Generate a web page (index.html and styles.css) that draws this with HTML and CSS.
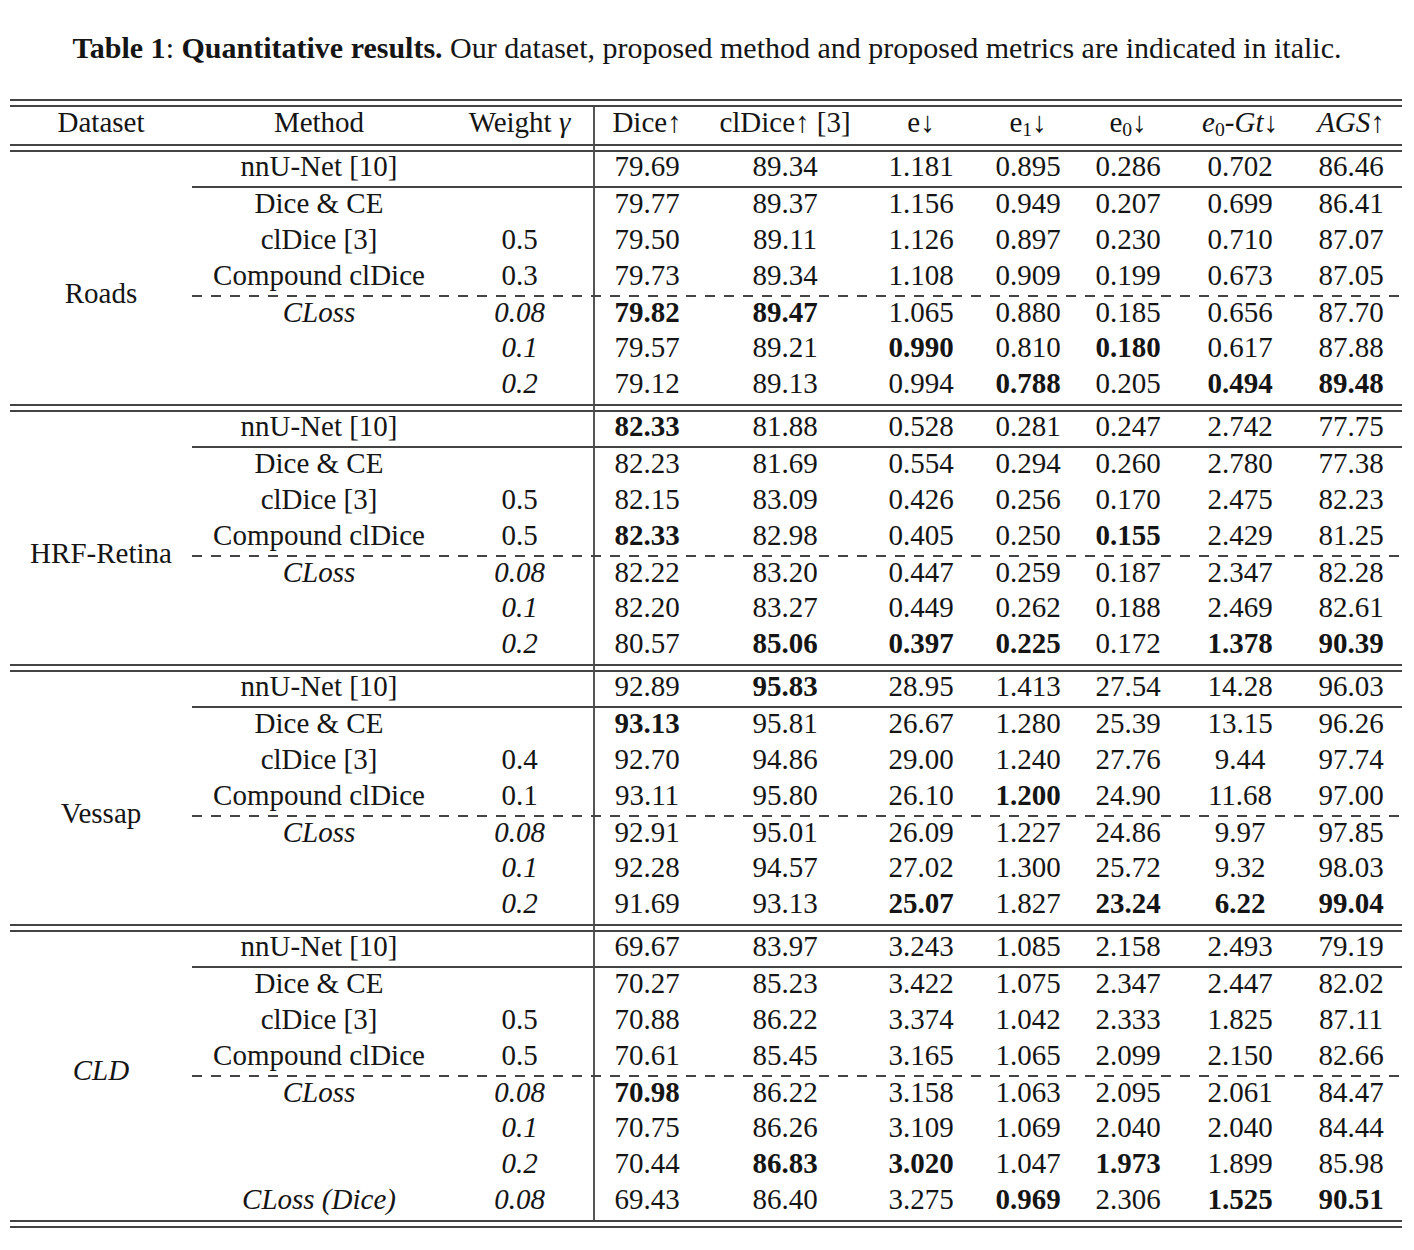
FILE: index.html
```html
<!DOCTYPE html>
<html>
<head>
<meta charset="utf-8">
<link rel="stylesheet" href="styles.css">
</head>
<body>
<div class="page">
<p class="caption"><b>Table 1</b>: <b>Quantitative results.</b> Our dataset, proposed method and proposed metrics are indicated in italic.</p>
<table class="results">
<colgroup>
<col class="c1"><col class="c2"><col class="c3"><col class="c4"><col class="c5"><col class="c6"><col class="c7"><col class="c8"><col class="c9"><col class="c10">
</colgroup>
<tbody>
<tr class="dbl"><td colspan="10"></td></tr>
<tr class="head">
<th>Dataset</th><th>Method</th><th>Weight <i>γ</i></th><th class="v">Dice↑</th><th>clDice↑ [3]</th><th>e↓</th><th>e<sub>1</sub>↓</th><th>e<sub>0</sub>↓</th><th><i>e</i><sub>0</sub>-<i>Gt</i>↓</th><th class="last"><i>AGS</i>↑</th>
</tr>
<tr class="dbl"><td colspan="3"></td><td colspan="7" class="v"></td></tr>

<tr class="row first"><td class="ds off" rowspan="8">Roads</td><td>nnU-Net [10]</td><td></td><td class="v">79.69</td><td>89.34</td><td>1.181</td><td>0.895</td><td>0.286</td><td>0.702</td><td class="last">86.46</td></tr>
<tr class="row"><td>Dice &amp; CE</td><td></td><td class="v">79.77</td><td>89.37</td><td>1.156</td><td>0.949</td><td>0.207</td><td>0.699</td><td class="last">86.41</td></tr>
<tr class="row"><td>clDice [3]</td><td>0.5</td><td class="v">79.50</td><td>89.11</td><td>1.126</td><td>0.897</td><td>0.230</td><td>0.710</td><td class="last">87.07</td></tr>
<tr class="row short"><td>Compound clDice</td><td>0.3</td><td class="v">79.73</td><td>89.34</td><td>1.108</td><td>0.909</td><td>0.199</td><td>0.673</td><td class="last">87.05</td></tr>
<tr class="dash"><td colspan="9"></td></tr>
<tr class="row short"><td class="it">CLoss</td><td class="it">0.08</td><td class="v"><b>79.82</b></td><td><b>89.47</b></td><td>1.065</td><td>0.880</td><td>0.185</td><td>0.656</td><td class="last">87.70</td></tr>
<tr class="row"><td></td><td class="it">0.1</td><td class="v">79.57</td><td>89.21</td><td><b>0.990</b></td><td>0.810</td><td><b>0.180</b></td><td>0.617</td><td class="last">87.88</td></tr>
<tr class="row"><td></td><td class="it">0.2</td><td class="v">79.12</td><td>89.13</td><td>0.994</td><td><b>0.788</b></td><td>0.205</td><td><b>0.494</b></td><td class="last"><b>89.48</b></td></tr>
<tr class="dbl"><td colspan="3"></td><td colspan="7" class="v"></td></tr>

<tr class="row first"><td class="ds off" rowspan="8">HRF-Retina</td><td>nnU-Net [10]</td><td></td><td class="v"><b>82.33</b></td><td>81.88</td><td>0.528</td><td>0.281</td><td>0.247</td><td>2.742</td><td class="last">77.75</td></tr>
<tr class="row"><td>Dice &amp; CE</td><td></td><td class="v">82.23</td><td>81.69</td><td>0.554</td><td>0.294</td><td>0.260</td><td>2.780</td><td class="last">77.38</td></tr>
<tr class="row"><td>clDice [3]</td><td>0.5</td><td class="v">82.15</td><td>83.09</td><td>0.426</td><td>0.256</td><td>0.170</td><td>2.475</td><td class="last">82.23</td></tr>
<tr class="row short"><td>Compound clDice</td><td>0.5</td><td class="v"><b>82.33</b></td><td>82.98</td><td>0.405</td><td>0.250</td><td><b>0.155</b></td><td>2.429</td><td class="last">81.25</td></tr>
<tr class="dash"><td colspan="9"></td></tr>
<tr class="row short"><td class="it">CLoss</td><td class="it">0.08</td><td class="v">82.22</td><td>83.20</td><td>0.447</td><td>0.259</td><td>0.187</td><td>2.347</td><td class="last">82.28</td></tr>
<tr class="row"><td></td><td class="it">0.1</td><td class="v">82.20</td><td>83.27</td><td>0.449</td><td>0.262</td><td>0.188</td><td>2.469</td><td class="last">82.61</td></tr>
<tr class="row"><td></td><td class="it">0.2</td><td class="v">80.57</td><td><b>85.06</b></td><td><b>0.397</b></td><td><b>0.225</b></td><td>0.172</td><td><b>1.378</b></td><td class="last"><b>90.39</b></td></tr>
<tr class="dbl"><td colspan="3"></td><td colspan="7" class="v"></td></tr>

<tr class="row first"><td class="ds off" rowspan="8">Vessap</td><td>nnU-Net [10]</td><td></td><td class="v">92.89</td><td><b>95.83</b></td><td>28.95</td><td>1.413</td><td>27.54</td><td>14.28</td><td class="last">96.03</td></tr>
<tr class="row"><td>Dice &amp; CE</td><td></td><td class="v"><b>93.13</b></td><td>95.81</td><td>26.67</td><td>1.280</td><td>25.39</td><td>13.15</td><td class="last">96.26</td></tr>
<tr class="row"><td>clDice [3]</td><td>0.4</td><td class="v">92.70</td><td>94.86</td><td>29.00</td><td>1.240</td><td>27.76</td><td>9.44</td><td class="last">97.74</td></tr>
<tr class="row short"><td>Compound clDice</td><td>0.1</td><td class="v">93.11</td><td>95.80</td><td>26.10</td><td><b>1.200</b></td><td>24.90</td><td>11.68</td><td class="last">97.00</td></tr>
<tr class="dash"><td colspan="9"></td></tr>
<tr class="row short"><td class="it">CLoss</td><td class="it">0.08</td><td class="v">92.91</td><td>95.01</td><td>26.09</td><td>1.227</td><td>24.86</td><td>9.97</td><td class="last">97.85</td></tr>
<tr class="row"><td></td><td class="it">0.1</td><td class="v">92.28</td><td>94.57</td><td>27.02</td><td>1.300</td><td>25.72</td><td>9.32</td><td class="last">98.03</td></tr>
<tr class="row"><td></td><td class="it">0.2</td><td class="v">91.69</td><td>93.13</td><td><b>25.07</b></td><td>1.827</td><td><b>23.24</b></td><td><b>6.22</b></td><td class="last"><b>99.04</b></td></tr>
<tr class="dbl"><td colspan="3"></td><td colspan="7" class="v"></td></tr>

<tr class="row first"><td class="ds it cld" rowspan="9">CLD</td><td>nnU-Net [10]</td><td></td><td class="v">69.67</td><td>83.97</td><td>3.243</td><td>1.085</td><td>2.158</td><td>2.493</td><td class="last">79.19</td></tr>
<tr class="row"><td>Dice &amp; CE</td><td></td><td class="v">70.27</td><td>85.23</td><td>3.422</td><td>1.075</td><td>2.347</td><td>2.447</td><td class="last">82.02</td></tr>
<tr class="row"><td>clDice [3]</td><td>0.5</td><td class="v">70.88</td><td>86.22</td><td>3.374</td><td>1.042</td><td>2.333</td><td>1.825</td><td class="last">87.11</td></tr>
<tr class="row short"><td>Compound clDice</td><td>0.5</td><td class="v">70.61</td><td>85.45</td><td>3.165</td><td>1.065</td><td>2.099</td><td>2.150</td><td class="last">82.66</td></tr>
<tr class="dash"><td colspan="9"></td></tr>
<tr class="row short"><td class="it">CLoss</td><td class="it">0.08</td><td class="v"><b>70.98</b></td><td>86.22</td><td>3.158</td><td>1.063</td><td>2.095</td><td>2.061</td><td class="last">84.47</td></tr>
<tr class="row"><td></td><td class="it">0.1</td><td class="v">70.75</td><td>86.26</td><td>3.109</td><td>1.069</td><td>2.040</td><td>2.040</td><td class="last">84.44</td></tr>
<tr class="row"><td></td><td class="it">0.2</td><td class="v">70.44</td><td><b>86.83</b></td><td><b>3.020</b></td><td>1.047</td><td><b>1.973</b></td><td>1.899</td><td class="last">85.98</td></tr>
<tr class="row"><td class="it">CLoss (Dice)</td><td class="it">0.08</td><td class="v">69.43</td><td>86.40</td><td>3.275</td><td><b>0.969</b></td><td>2.306</td><td><b>1.525</b></td><td class="last"><b>90.51</b></td></tr>
<tr class="dbl"><td colspan="10"></td></tr>
</tbody>
</table>
</div>
</body>
</html>
```
FILE: styles.css
```css
html, body {
  margin: 0;
  padding: 0;
  background: #fff;
}
body {
  font-family: "Liberation Serif", "Times New Roman", serif;
  color: #151515;
}
.page {
  width: 1414px;
  padding-top: 31px;
}
.caption {
  margin: 0 0 34px 0;
  font-size: 30px;
  line-height: 34px;
  text-align: center;
}
.results {
  margin-left: 10px;
  width: 1392px;
  table-layout: fixed;
  border-collapse: separate;
  border-spacing: 0;
  font-size: 29px;
}
.c1 { width: 182px; }
.c2 { width: 254px; }
.c3 { width: 147px; }
.c4 { width: 106px; }
.c5 { width: 172px; }
.c6 { width: 100px; }
.c7 { width: 114px; }
.c8 { width: 86px; }
.c9 { width: 138px; }
.c10 { width: 93px; }
.results th,
.results td {
  padding: 0 0 6px 0;
  text-align: center;
  vertical-align: middle;
  white-space: nowrap;
  font-weight: normal;
  line-height: 28px;
}
.results b {
  font-weight: bold;
}
.results .last {
  padding-right: 9px;
}
.head {
  height: 37px;
}
.head th {
  padding-bottom: 8px;
}
.row {
  height: 36px;
}
.row.short {
  height: 35px;
}
.results .dbl td {
  padding: 0;
  height: 4px;
  border-top: 2px solid #444;
  border-bottom: 2px solid #444;
}
.dbl {
  height: 8px;
}
.results .dash td {
  padding: 0;
  height: 2px;
  line-height: 0;
  background-image: repeating-linear-gradient(to right, #444 0, #444 10px, transparent 10px, transparent 19px);
  background-size: 100% 2px;
  background-repeat: no-repeat;
  background-position: 0 0;
}
.dash {
  height: 2px;
}
.first td {
  border-bottom: 2px solid #444;
}
.first td.ds {
  border-bottom: none;
}
.results .v {
  border-left: 2px solid #555;
}
.it {
  font-style: italic;
}
.results .ds.off {
  padding-top: 36px;
}
.results .ds.cld {
  padding-bottom: 12px;
}
sub {
  font-size: 0.68em;
  line-height: 0;
  vertical-align: -0.22em;
}
```
